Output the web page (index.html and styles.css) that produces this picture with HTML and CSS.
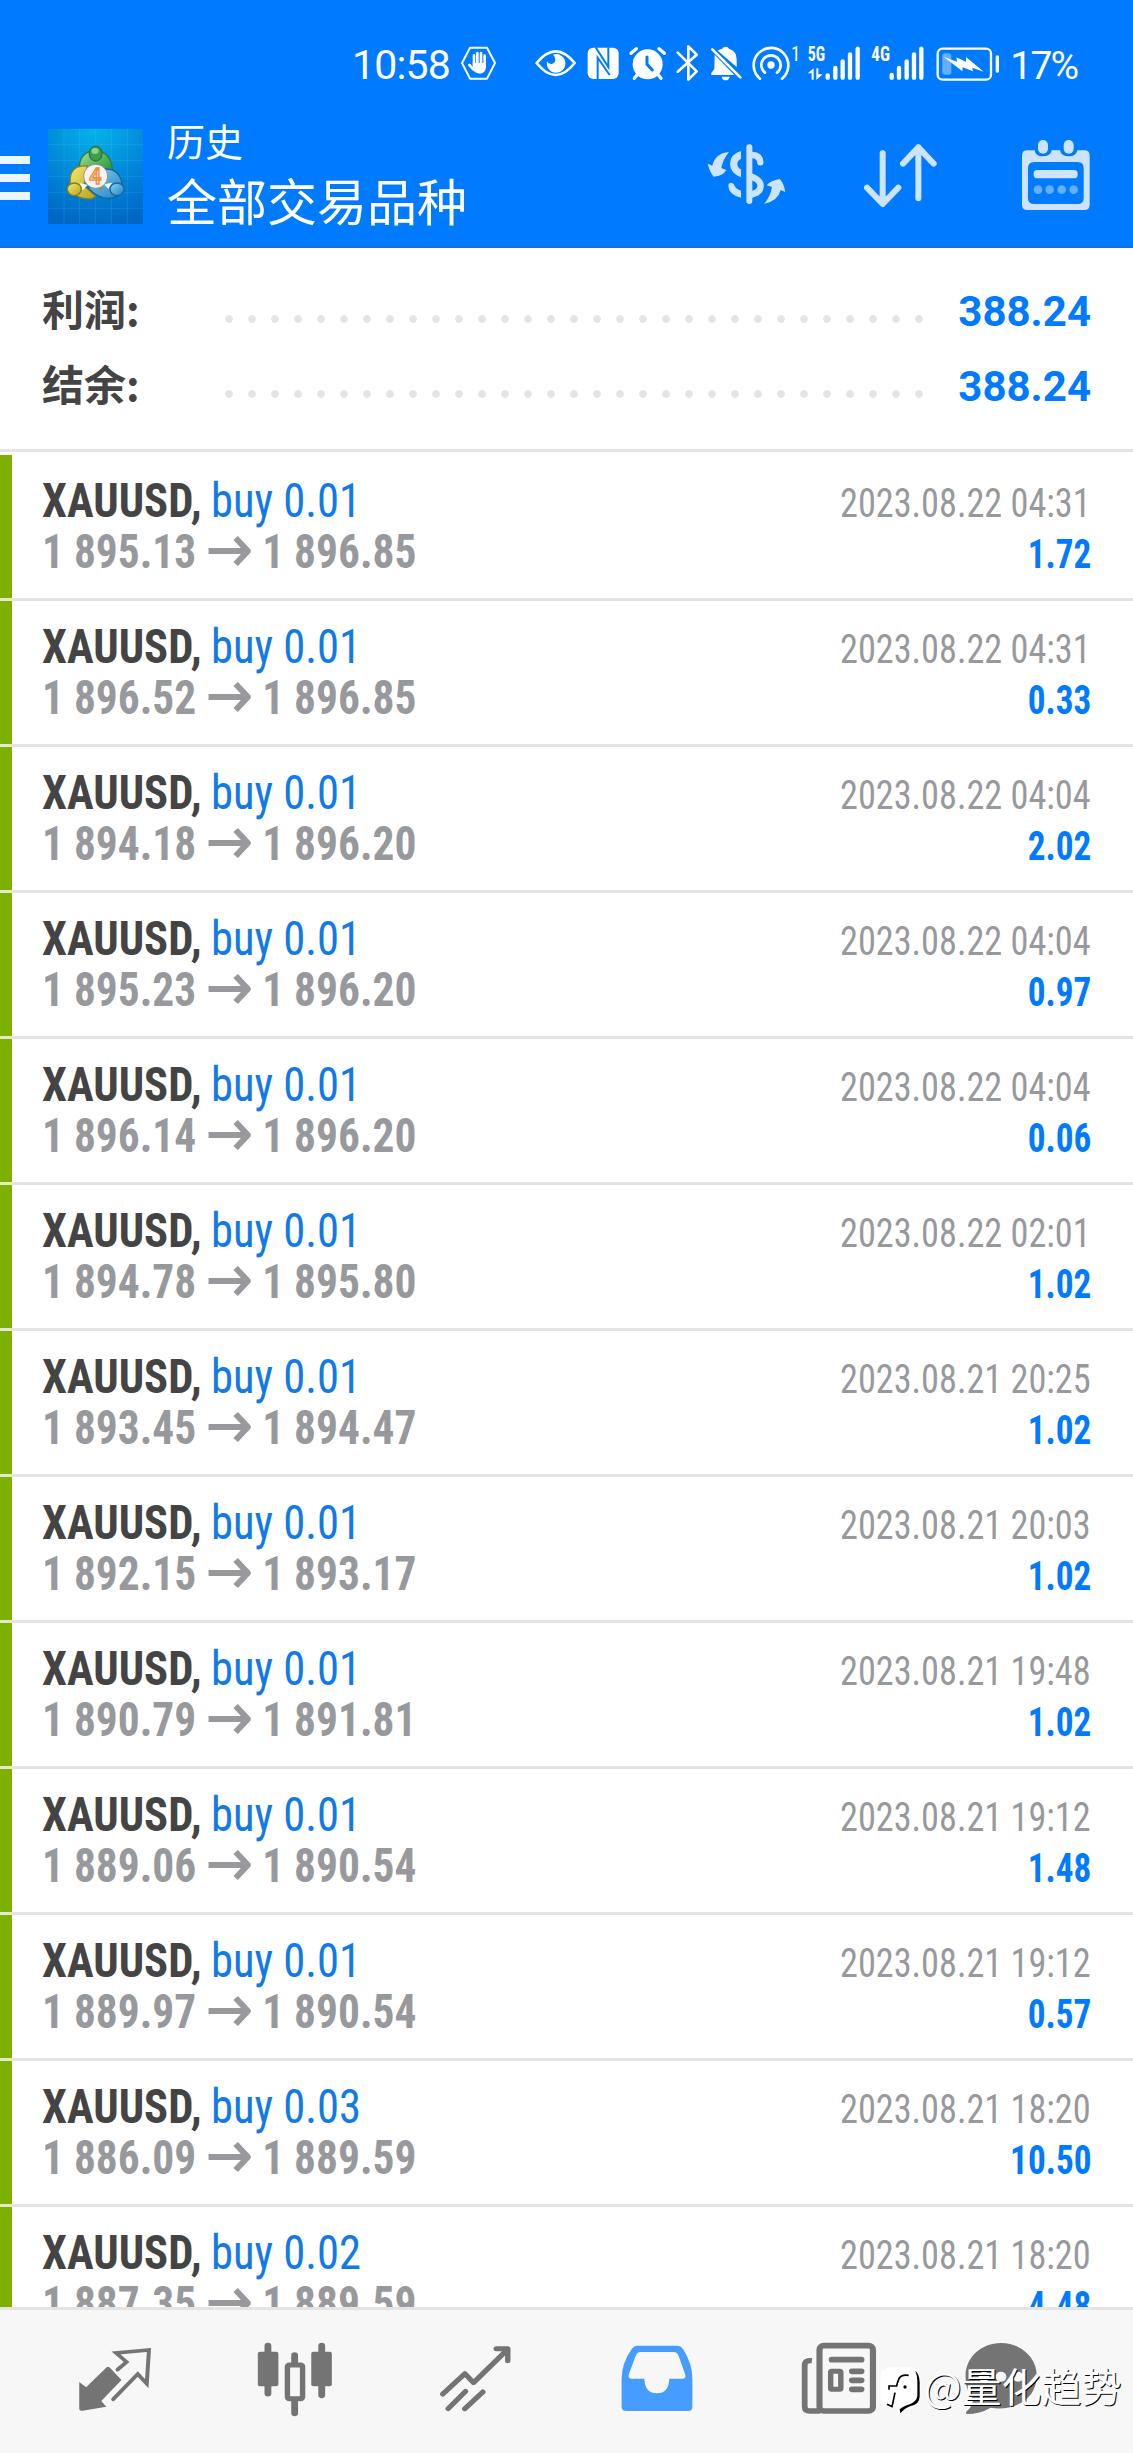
FILE: index.html
```html
<!DOCTYPE html>
<html lang="zh-CN">
<head>
<meta charset="utf-8">
<title>历史</title>
<link rel="stylesheet" href="styles.css">
</head>
<body>
<header class="header">
  <div class="status">
    <span class="clock">10:58</span>
    <svg class="hand" viewBox="360 40 110 120">
      <path d="M390 54H441L465 100L441 147H390L366 100Z" fill="none" stroke="#fff" stroke-width="6" stroke-linejoin="round"/>
      <path d="M402 77V108M412 70V108M423 70V108M434 78V108M388 106L400 119" stroke="#fff" stroke-width="8" stroke-linecap="round"/>
      <path d="M398 100H438V112Q436 131 420 132Q407 132 400 122Z" fill="#fff"/>
    </svg>
    <svg class="icons" viewBox="580 40 1410 120">
      <path d="M591 100Q648 30 705 100Q648 172 591 100Z" fill="none" stroke="#fff" stroke-width="8" stroke-linejoin="round"/>
      <path d="M640 75A28 28 0 1 1 622 95Q627 105 637 103Q650 98 646 86Q645 79 640 75Z" fill="#fff"/>
      <rect x="744" y="54" width="93" height="94" rx="17" fill="#fff"/>
      <path d="M774 149V84L810 136M768 53L806 112V53" fill="none" stroke="#007aff" stroke-width="6"/>
      <circle cx="924" cy="104" r="45" fill="#fff"/>
      <path d="M874 71L890 57M974 71L958 57M892 136L884 146M956 136L964 146" stroke="#fff" stroke-width="10" stroke-linecap="round"/>
      <path d="M922 82V104L938 121" fill="none" stroke="#007aff" stroke-width="9" stroke-linecap="round"/>
      <path d="M1014 69L1071 125L1046 150V50L1071 75L1014 126" fill="none" stroke="#fff" stroke-width="8" stroke-linecap="round" stroke-linejoin="round"/>
      <path d="M1134 63Q1140 58 1148 57Q1150 51 1158 51Q1166 51 1168 57Q1190 64 1191 88V112ZM1125 75L1184 136H1115V130L1124 118ZM1146 141H1170Q1168 152 1158 152Q1148 152 1146 141Z" fill="#fff"/>
      <path d="M1118 59L1202 143" stroke="#fff" stroke-width="8" stroke-linecap="round"/>
      <g transform="translate(1170 0)">
        <circle cx="124" cy="106" r="11" fill="#fff"/>
        <path d="M106 129A29 29 0 1 1 142 129M91 147A52 52 0 1 1 157 147" fill="none" stroke="#fff" stroke-width="8" stroke-linecap="round"/>
        <text x="184" y="93" font-size="60" textLength="28" lengthAdjust="spacingAndGlyphs">1</text>
        <text x="234" y="95" font-size="58" font-weight="700" textLength="52" lengthAdjust="spacingAndGlyphs">5G</text>
        <text x="425" y="95" font-size="58" font-weight="700" textLength="56" lengthAdjust="spacingAndGlyphs">4G</text>
        <path d="M234 131L252 116V150H246V131ZM260 116H266V134H279L260 151Z" fill="#fff"/>
        <path d="M294 137V144M317 115V144M339 95V144M361 74V144M384 57V144M486 136V144M508 115V144M531 95V144M553 74V144M575 57V144" stroke="#fff" stroke-width="13" stroke-linecap="round"/>
        <rect x="624" y="57" width="160" height="93" rx="15" fill="none" stroke="#fff" stroke-width="7"/>
        <rect x="638" y="71" width="27" height="64" rx="8" fill="#66afff"/>
        <path d="M642 81L682 96L680 83L709 96L709 82L762 126L728 114L730 125L699 113L698 125Z" fill="#fff"/>
        <path d="M803 82V124" stroke="#fff" stroke-width="10" stroke-linecap="round"/>
      </g>
    </svg>
    <span class="percent">17%</span>
  </div>
  <div class="toolbar">
    <div class="menu"><i></i><i></i><i></i></div>
    <svg class="logo" viewBox="12 15 285 285">
      <defs>
        <radialGradient id="sky" cx=".5" cy="0" r="1"><stop offset="0" stop-color="#04b4ea"/><stop offset=".6" stop-color="#0284d8"/><stop offset="1" stop-color="#0068c4"/></radialGradient>
        <linearGradient id="green" x2="1" y2="1"><stop offset="0" stop-color="#a5dda0"/><stop offset=".6" stop-color="#45ab50"/><stop offset="1" stop-color="#237d2d"/></linearGradient>
        <linearGradient id="gold" x2="1" y2="1"><stop offset="0" stop-color="#f4eb70"/><stop offset="1" stop-color="#b6a11d"/></linearGradient>
        <linearGradient id="blue" x2="1" y2="1"><stop offset="0" stop-color="#89d7fa"/><stop offset="1" stop-color="#1c7fc1"/></linearGradient>
      </defs>
      <rect x="12" y="15" width="285" height="285" fill="url(#sky)"/>
      <path d="M60 15V300M107 15V300M154 15V300M202 15V300M250 15V300M12 62H297M12 110H297M12 158H297M12 206H297M12 253H297" stroke="#77d5ff" stroke-opacity=".22" stroke-width="2"/>
      <path d="M106 125Q111 82 154 80Q199 83 205 133Q205 155 194 170L154 130L120 134Q108 136 106 125Z" fill="url(#green)" stroke="#2b7d36" stroke-width="4"/>
      <path d="M130 126Q85 122 79 160Q76 186 88 205Q105 227 144 224L155 216L120 185Z" fill="url(#gold)" stroke="#8a801d" stroke-width="4"/>
      <path d="M185 135Q222 134 233 172Q240 213 204 222Q169 231 130 190L175 185Z" fill="url(#blue)" stroke="#19659b" stroke-width="4"/>
      <path d="M107 178L132 182L116 199ZM180 181L204 176L193 195Z" fill="#fff"/>
      <path d="M155 188L180 180L172 199Z" fill="#a48c25"/>
      <ellipse cx="155" cy="89" rx="19" ry="22" fill="#409d4b" stroke="#287c32" stroke-width="4"/>
      <ellipse cx="153" cy="81" rx="11" ry="9" fill="#93cf95"/>
      <ellipse cx="91" cy="196" rx="21" ry="19" fill="url(#gold)" stroke="#887d1c" stroke-width="4"/>
      <ellipse cx="219" cy="196" rx="21" ry="19" fill="url(#blue)" stroke="#1a6599" stroke-width="4"/>
      <circle cx="155" cy="157" r="36" fill="#f4f4f4" stroke="#737373" stroke-width="2"/>
      <text x="136" y="180" font-size="64" font-weight="500" fill="#fff0df" stroke="#f18b35" stroke-width="4">4</text>
    </svg>
    <div class="titles"><span class="sub">历史</span><span class="main">全部交易品种</span></div>
    <div class="actions">
      <svg class="act" viewBox="75 55 245 225">
        <path d="M80 132L94 138Q102 101 144 97Q126 119 121 145L136 151Q126 169 98 171Q86 157 80 132ZM313 217L299 211Q291 244 250 252Q268 230 273 202L257 197Q269 182 296 178Q309 192 313 217Z" fill="#cce4ff"/>
        <path d="M180 94V118Q169 122 169 133Q169 145 180 149V173Q147 160 147 132Q147 104 180 94ZM142 199Q142 189 151 189Q159 190 161 199Q165 209 180 213V234Q143 226 142 199Z" fill="#cce4ff"/>
        <path d="M205 83V244" stroke="#cce4ff" stroke-width="18" stroke-linecap="round"/>
        <path d="M213 106Q237 107 238 128" fill="none" stroke="#cce4ff" stroke-width="19" stroke-linecap="round"/>
        <path d="M205 169Q239 179 239 199Q238 220 205 226" fill="none" stroke="#cce4ff" stroke-width="19"/>
      </svg>
      <svg class="act" viewBox="540 55 245 225">
        <path d="M608 101V252M561 204L608 253L655 204M715 236V83M669 132L715 83L761 132" fill="none" stroke="#cce4ff" stroke-width="18" stroke-linecap="round" stroke-linejoin="round"/>
      </svg>
      <svg class="act" viewBox="1004 55 245 225">
        <path fill-rule="evenodd" d="M1041 92H1063Q1065 110 1087 110Q1111 110 1114 92H1139Q1143 110 1165 110Q1188 110 1191 92H1212Q1228 92 1228 108V255Q1228 271 1212 271H1041Q1025 271 1025 255V108Q1025 92 1041 92ZM1062 127Q1043 127 1043 146V235Q1043 253 1062 253H1192Q1210 253 1210 235V146Q1210 127 1192 127Z" fill="#cce4ff"/>
        <rect x="1073" y="61" width="30" height="41" rx="15" fill="#cce4ff"/><rect x="1150" y="61" width="30" height="41" rx="15" fill="#cce4ff"/>
        <rect x="1060" y="151" width="132" height="25" rx="11" fill="#cce4ff"/>
        <g fill="#66afff"><circle cx="1073" cy="210" r="13"/><circle cx="1108" cy="210" r="13"/><circle cx="1144" cy="210" r="13"/><circle cx="1180" cy="210" r="13"/></g>
      </svg>
    </div>
  </div>
</header>
<section class="summary">
  <div class="total"><span class="label">利润:</span><span class="dots"></span><span class="value">388.24</span></div>
  <div class="total"><span class="label">结余:</span><span class="dots"></span><span class="value">388.24</span></div>
</section>
<main class="deals" id="deals"></main>
<nav class="tabs">
  <svg viewBox="210 480 216 240" preserveAspectRatio="none">
    <path d="M219 606L238 622L295 562Q299 558 304 563L336 600L280 663L294 680L228 692Q219 693 219 687Z" fill="#747474"/>
    <path d="M325 569L350 546L321 519L412 510L406 611L381 582L313 658" fill="none" stroke="#747474" stroke-width="11" stroke-linecap="round"/>
  </svg>
  <svg viewBox="710 480 216 240" preserveAspectRatio="none">
    <path d="M743 498V640M892 498V645M817 526V555M817 660V699" stroke="#747474" stroke-width="19" stroke-linecap="round"/>
    <rect x="715" y="515" width="57" height="104" rx="6" fill="#747474"/><rect x="863" y="515" width="57" height="104" rx="6" fill="#747474"/>
    <rect x="797" y="555" width="42" height="101" rx="5" fill="#f7f7f7" stroke="#747474" stroke-width="15"/>
  </svg>
  <svg viewBox="1212 480 216 240" preserveAspectRatio="none">
    <path d="M1228 642L1289 581L1313 608L1408 508M1376 506H1408V542M1243 686L1291 634M1289 686L1339 636" fill="none" stroke="#747474" stroke-width="15" stroke-linecap="round" stroke-linejoin="round"/>
  </svg>
  <svg viewBox="145 480 216 240" preserveAspectRatio="none">
    <path fill-rule="evenodd" d="M199 497H309Q319 497 325 507Q351 550 351 597V680Q351 693 339 693H168Q155 693 155 680V597Q155 550 183 507Q189 497 199 497ZM208 516Q199 516 195 525L175 583Q172 596 182 596H218Q219 639 253 640Q286 639 287 596H324Q335 596 331 583L312 525Q308 516 299 516Z" fill="#469dff"/>
  </svg>
  <svg viewBox="649 480 216 240" preserveAspectRatio="none">
    <rect x="703" y="497" width="148" height="196" rx="12" fill="none" stroke="#747474" stroke-width="17"/>
    <path d="M682 542Q662 540 662 556V680Q662 693 676 693H705" fill="none" stroke="#747474" stroke-width="16"/>
    <path d="M737 539H819M793 574H819M793 601H819M793 628H819" stroke="#747474" stroke-width="17" stroke-linecap="round"/>
    <rect x="734" y="574" width="28" height="54" rx="3" fill="none" stroke="#747474" stroke-width="15"/>
  </svg>
  <svg viewBox="1096 480 216 240" preserveAspectRatio="none">
    <path d="M1204 489C1260 489 1303 532 1303 588C1303 657 1240 695 1175 683Q1146 702 1109 702Q1105 698 1109 694Q1125 680 1127 657C1110 635 1106 615 1106 588C1106 532 1149 489 1204 489Z" fill="#747474"/>
    <g fill="#f7f7f7"><circle cx="1157" cy="590" r="15"/><circle cx="1204" cy="590" r="15"/><circle cx="1251" cy="590" r="15"/></g>
  </svg>
</nav>
<div class="watermark">
  <svg viewBox="30 35 125 150">
    <path d="M62 42H122Q151 45 151 76V128Q151 156 122 161Q105 169 91 179L88 162H54Q31 158 31 128V75Q32 45 62 42Z" fill="#fff"/>
    <path d="M136 52Q148 62 149 86V128Q149 153 122 158Q105 164 91 180L89 168Q96 160 115 154Q139 148 142 128V84Q142 67 136 52Z" fill="#000"/>
    <path d="M116 66Q93 63 87 76Q82 87 80 98H57V109M75 118L66 160L51 153" fill="none" stroke="#000" stroke-width="5"/>
    <circle cx="105" cy="101" r="5" fill="#000"/>
  </svg>
  <span>@量化趋势</span>
</div>
<script src="deals.js"></script>
</body>
</html>
```
FILE: styles.css
```css
* { box-sizing: border-box; }
body {
  margin: 0;
  width: 1133px;
  height: 2453px;
  overflow: hidden;
  position: relative;
  display: flex;
  flex-direction: column;
  background: #fff;
  font-family: Roboto, "Noto Sans CJK SC", sans-serif;
}
svg { display: block; flex: none; }

.header { height: 248px; flex: none; background: #007aff; border-bottom: 2px solid #1070dc; color: #fff; }
.status { height: 104px; padding: 43px 0 0 352px; display: flex; align-items: flex-start; }
.clock { width: 108px; font-size: 41px; font-weight: 450; line-height: 44px; letter-spacing: -0.8px; }
.hand { width: 36.7px; height: 40px; }
.icons { width: 470px; height: 40px; margin-left: 36.6px; fill: #fff; font-family: "Roboto Condensed", Roboto, sans-serif; }
.percent { margin-left: 7px; font-size: 39px; font-weight: 450; line-height: 46px; letter-spacing: -1.8px; }

.toolbar { display: flex; }
.menu { width: 30px; margin-top: 52px; display: flex; flex-direction: column; gap: 10px; }
.menu i { height: 8px; background: #ebf5ff; }
.logo { width: 95px; height: 95px; margin: 25px 0 0 18px; }
.titles { margin-left: 24px; display: flex; flex-direction: column; font-family: "Noto Sans CJK SC", sans-serif; }
.sub { margin-top: 16px; font-size: 38px; line-height: 40px; }
.main { margin-top: 11px; font-size: 50px; line-height: 56px; }
.actions { margin: 34px 36px 0 auto; display: flex; gap: 73.2px; }
.act { width: 81.7px; height: 75px; }

.summary { height: 204px; flex: none; padding: 26px 42px 0 42px; border-bottom: 3px solid #e4e4e4; }
.total { height: 75px; display: flex; align-items: center; }
.label { width: 183px; margin-top: -7px; font: 700 42px/60px "Noto Sans CJK SC", sans-serif; color: #444; }
.dots {
  width: 713px;
  height: 8px;
  margin-top: 15px;
  background: radial-gradient(circle at 4px 4px, #e4e4e4 3.4px, transparent 4.2px) 0 0 / 23px 8px repeat-x;
}
.value { margin-left: auto; font-size: 42px; font-weight: 700; color: #007aff; }

.deals { flex: none; height: 1855px; padding-top: 3px; overflow: hidden; font-family: "Roboto Condensed", Roboto, sans-serif; }
.deal {
  height: 146px;
  padding: 20px 42px 0 42px;
  background:
    linear-gradient(#7eb000, #7eb000) 0 0 / 12px 143px no-repeat,
    linear-gradient(#e4e9cb, #e4e9cb) 0 143px / 12px 3px no-repeat,
    linear-gradient(#e4e4e4, #e4e4e4) 0 143px / 100% 3px no-repeat;
}
.line { height: 51px; display: flex; justify-content: space-between; align-items: baseline; font-size: 48px; line-height: 51px; }
.order { transform: scaleX(0.929); transform-origin: left; }
.symbol { font-weight: 700; color: #444; }
.side { margin-left: 10px; color: #117ae8; }
.time { font-size: 40px; color: #97999c; transform: scaleX(0.906); transform-origin: right; }
.prices { display: flex; align-items: baseline; font-weight: 700; color: #97999c; transform: scaleX(0.904); transform-origin: left; }
.arrow { width: 47px; height: 30px; margin: 0 13px; transform: translateY(-2px); }
.profit { font-size: 40px; font-weight: 700; color: #007aff; transform: scaleX(0.88); transform-origin: right; }

.tabs {
  height: 146px;
  flex: none;
  padding: 30px 0 0 75.8px;
  display: grid;
  grid-template-columns: 180.5px 181.2px 181px 181.8px 161.4px 78px;
  border-top: 3px solid #e4e4e4;
  background: #f7f7f7;
}
.tabs svg { width: 78px; height: 80px; }

.watermark { position: absolute; left: 880px; top: 2365px; display: flex; color: #fff; font: 400 40px/40px "Noto Sans CJK SC", sans-serif; text-shadow: 1px 1px 0 #000; }
.watermark svg { width: 41.7px; height: 50px; }
.watermark span { margin-left: 2px; white-space: nowrap; }
```
FILE: deals.js
```js
const deals = [
  ["0.01", "1 895.13", "1 896.85", "2023.08.22 04:31", "1.72"],
  ["0.01", "1 896.52", "1 896.85", "2023.08.22 04:31", "0.33"],
  ["0.01", "1 894.18", "1 896.20", "2023.08.22 04:04", "2.02"],
  ["0.01", "1 895.23", "1 896.20", "2023.08.22 04:04", "0.97"],
  ["0.01", "1 896.14", "1 896.20", "2023.08.22 04:04", "0.06"],
  ["0.01", "1 894.78", "1 895.80", "2023.08.22 02:01", "1.02"],
  ["0.01", "1 893.45", "1 894.47", "2023.08.21 20:25", "1.02"],
  ["0.01", "1 892.15", "1 893.17", "2023.08.21 20:03", "1.02"],
  ["0.01", "1 890.79", "1 891.81", "2023.08.21 19:48", "1.02"],
  ["0.01", "1 889.06", "1 890.54", "2023.08.21 19:12", "1.48"],
  ["0.01", "1 889.97", "1 890.54", "2023.08.21 19:12", "0.57"],
  ["0.03", "1 886.09", "1 889.59", "2023.08.21 18:20", "10.50"],
  ["0.02", "1 887.35", "1 889.59", "2023.08.21 18:20", "4.48"]
];
document.getElementById("deals").innerHTML = deals.map(([lots, open, close, time, profit]) => `
  <article class="deal">
    <div class="line"><div class="order"><span class="symbol">XAUUSD,</span><span class="side">buy ${lots}</span></div><span class="time">${time}</span></div>
    <div class="line"><div class="prices"><span>${open}</span><svg class="arrow" viewBox="0 0 42 30" preserveAspectRatio="none"><path d="M0 15H38M27 2L39 15L27 28" fill="none" stroke="#97999c" stroke-width="6"/></svg><span>${close}</span></div><span class="profit">${profit}</span></div>
  </article>`).join("");
```
